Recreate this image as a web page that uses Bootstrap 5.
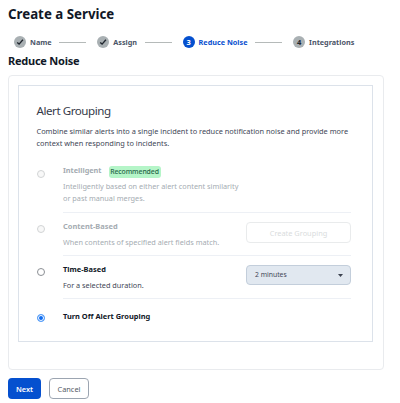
<!DOCTYPE html>
<html lang="en">
<head>
<meta charset="utf-8">
<meta name="viewport" content="width=device-width, initial-scale=1">
<title>Create a Service</title>
<link href="https://cdn.jsdelivr.net/npm/bootstrap@5.3.0/dist/css/bootstrap.min.css" rel="stylesheet">
<style>
body{font-family:"Noto Sans","Open Sans",sans-serif;font-size:7.38px;line-height:12px;color:#414656;background:#fff;overflow:hidden}
.page-wrap{width:400px;height:403px;padding:5px 0 0 8px}
h1{font-size:13.3px;line-height:18px;color:#111827}
h2{font-size:11px;line-height:14px;color:#111827;letter-spacing:-.24px}
h3{font-size:11.6px;line-height:14px;color:#353a49;font-weight:400;letter-spacing:-.46px}
.steps{height:12px;margin:13px 0 6px 6px;font-size:7.25px;color:#4b5568}
.step-dot{width:12px;height:12px;border-radius:50%;background:#a9b0b3;color:#20262e;font-size:7.5px;margin-right:4px;flex:none}
.step-dot svg{width:8px;height:8px}
.step-now{color:#0b50cf}
.step-now .step-dot{background:#0550cf;color:#fff}
.step-line{width:27px;height:1px;background:#b5bab9;flex:none;margin:1px 10.8px 0 7.8px}
.outer-box{width:376px;height:295px;margin-top:7px;padding:9px;border:1px solid #e9ebee;border-radius:4px}
.inner-box{width:355px;height:257px;border:1px solid #dce2ea;padding:18px 21px 0 17.5px}
.intro{margin:7px 0 0;height:24px;white-space:nowrap}
.choice{height:43.2px}
.choice-first{height:50px;margin-top:14px}
.dot-cell{width:26.5px;flex:none;padding-top:12px}
.choice-first .dot-cell{padding-top:7px}
.choice:last-child .dot-cell{padding-top:15px}
.choice .form-check-input{width:8px;height:8px;margin:0;border-color:#8b8f94;background-image:none;display:block}
.choice .form-check-input:disabled{opacity:1;background-color:#f8f8f8;border-color:#d2d4d5}
.choice .form-check-input:checked{border-color:#5ba2f9;background:#0f6cf0;box-shadow:inset 0 0 0 1px #fff}
.choice-body{border-bottom:1px solid #edf0f5;padding-top:7px}
.choice-first .choice-body{padding-top:1px}
.choice:last-child .choice-body{border:0;padding-top:10.5px}
.choice-name{font-weight:700;color:#111827;line-height:12px;font-size:7.45px}
.muted-choice,.muted-choice .choice-name{color:#a5acb2}
.tag{background:#b5f5c8;color:#276749;border-radius:3px;font-size:6.9px;font-weight:500;line-height:12px;width:52px;height:12px;margin:2px 0 -2px 7px;letter-spacing:-.1px}
.choice-first .choice-name{font-size:7.3px}
.desc{font-size:7.3px;line-height:12px;white-space:nowrap;margin-top:3.5px}
.side-ctl{width:105px;height:21px;border-radius:4px;font-size:7.4px;line-height:12px;padding:0;margin-top:2px}
.btn-ghost,.btn-ghost:disabled{border:1px solid #e9ebec;color:#d9dcdd;opacity:1;background:#fff}
.pick{height:20px;border:1px solid #c3cedb;background:#e1e8f0;color:#414656;padding:0 7px 0 8px;font-size:6.8px}
.pick svg{width:5px;height:3px}
.actions{margin-top:8px;gap:8px}
.actions .btn{height:21px;font-size:7.4px;line-height:12px;border-radius:4px;padding:0}
.actions .btn-next{width:33px;background:#0550cf;color:#fff;font-weight:600}
.actions .btn-cancel{width:40px;border:1px solid #9ca5b1;color:#555b66;background:#fff}
</style>
<script src="https://cdn.jsdelivr.net/npm/bootstrap@5.3.0/dist/js/bootstrap.bundle.min.js"></script>
</head>
<body>
<main class="page-wrap">
  <h1 class="fw-bold m-0">Create a Service</h1>
  <div class="steps d-flex align-items-center fw-bold text-nowrap">
    <div class="d-flex align-items-center"><span class="step-dot d-flex align-items-center justify-content-center"><svg viewBox="0 0 8 8" fill="none" stroke="currentColor" stroke-width="1.4"><path d="M1.2 4.4 3.1 6.1 6.9 1.8"/></svg></span>Name</div>
    <span class="step-line"></span>
    <div class="d-flex align-items-center"><span class="step-dot d-flex align-items-center justify-content-center"><svg viewBox="0 0 8 8" fill="none" stroke="currentColor" stroke-width="1.4"><path d="M1.2 4.4 3.1 6.1 6.9 1.8"/></svg></span>Assign</div>
    <span class="step-line"></span>
    <div class="d-flex align-items-center step-now"><span class="step-dot d-flex align-items-center justify-content-center">3</span>Reduce Noise</div>
    <span class="step-line"></span>
    <div class="d-flex align-items-center"><span class="step-dot d-flex align-items-center justify-content-center">4</span>Integrations</div>
  </div>
  <h2 class="fw-bold m-0">Reduce Noise</h2>
  <section class="outer-box">
    <div class="inner-box">
      <h3 class="m-0">Alert Grouping</h3>
      <p class="intro">Combine similar alerts into a single incident to reduce notification noise and provide more<br>context when responding to incidents.</p>
      <div class="choice choice-first d-flex muted-choice">
        <div class="dot-cell"><input class="form-check-input" type="radio" name="grouping" disabled></div>
        <div class="choice-body flex-grow-1">
          <div class="d-flex"><span class="choice-name">Intelligent</span><span class="tag text-center">Recommended</span></div>
          <div class="desc">Intelligently based on either alert content similarity<br>or past manual merges.</div>
        </div>
      </div>
      <div class="choice d-flex muted-choice">
        <div class="dot-cell"><input class="form-check-input" type="radio" name="grouping" disabled></div>
        <div class="choice-body flex-grow-1 d-flex justify-content-between">
          <div><div class="choice-name">Content-Based</div><div class="desc">When contents of specified alert fields match.</div></div>
          <button class="btn side-ctl btn-ghost" disabled>Create Grouping</button>
        </div>
      </div>
      <div class="choice d-flex">
        <div class="dot-cell"><input class="form-check-input" type="radio" name="grouping"></div>
        <div class="choice-body flex-grow-1 d-flex justify-content-between">
          <div><div class="choice-name">Time-Based</div><div class="desc">For a selected duration.</div></div>
          <button class="btn side-ctl pick d-flex align-items-center justify-content-between">2 minutes<svg viewBox="0 0 5 3"><path d="M0 0h5L2.5 3z" fill="#3c4250"/></svg></button>
        </div>
      </div>
      <div class="choice d-flex">
        <div class="dot-cell"><input class="form-check-input" type="radio" name="grouping" checked></div>
        <div class="choice-body flex-grow-1"><div class="choice-name">Turn Off Alert Grouping</div></div>
      </div>
    </div>
  </section>
  <div class="actions d-flex">
    <button class="btn btn-next">Next</button>
    <button class="btn btn-cancel">Cancel</button>
  </div>
</main>
</body>
</html>
